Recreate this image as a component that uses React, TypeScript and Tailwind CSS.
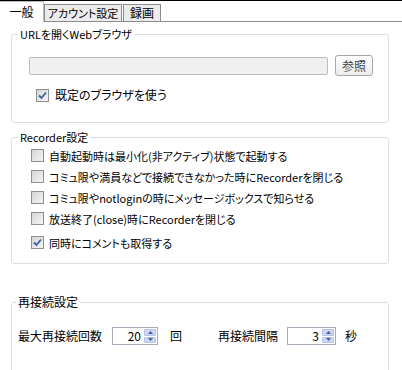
import React from 'react';

const CheckBox: React.FC<{ checked?: boolean }> = ({ checked }) => (
  <span className="flex h-[13px] w-[13px] shrink-0 items-center justify-center border border-[#8f8f8f] bg-linear-to-br from-[#d6d6d6] to-[#f4f4f4]">
    {checked && (
      <svg width="9" height="9" viewBox="0 0 9 9">
        <path d="M1 4.5 L3.5 7 L8 1.5" fill="none" stroke="#3d5ea6" strokeWidth="1.8" />
      </svg>
    )}
  </span>
);

const Spinner: React.FC<{ value: number; width: string }> = ({ value, width }) => (
  <div className={`flex h-[18px] items-stretch border border-[#a5acb5] bg-white ${width}`}>
    <span className="flex-1 pr-[2px] text-right leading-[16px]">{value}</span>
    <div className="flex w-[14px] flex-col gap-px bg-white p-px">
      <div className="flex flex-1 items-center justify-center rounded-[1px] border border-[#b4c3e6] bg-[#c9d6f5]">
        <svg width="5" height="3" viewBox="0 0 5 3">
          <path d="M0 3 L2.5 0 L5 3 Z" fill="#4d6185" />
        </svg>
      </div>
      <div className="flex flex-1 items-center justify-center rounded-[1px] border border-[#b4c3e6] bg-[#c9d6f5]">
        <svg width="5" height="3" viewBox="0 0 5 3">
          <path d="M0 0 L5 0 L2.5 3 Z" fill="#4d6185" />
        </svg>
      </div>
    </div>
  </div>
);

const recorderOptions = [
  { label: '自動起動時は最小化(非アクティブ)状態で起動する', checked: false },
  { label: 'コミュ限や満員などで接続できなかった時にRecorderを閉じる', checked: false },
  { label: 'コミュ限やnotloginの時にメッセージボックスで知らせる', checked: false },
  { label: '放送終了(close)時にRecorderを閉じる', checked: false },
];

export default function App() {
  return (
    <div className="h-[370px] w-[402px] overflow-hidden bg-white font-['Noto_Sans_CJK_JP','Noto_Sans',sans-serif] text-[12px] leading-[14px] text-black [font-feature-settings:'palt']">
      <div className="h-px bg-black" />

      {/* tabs */}
      <div className="flex h-[21px] items-end border-b border-[#8c8c8c]">
        <div className="-mb-px flex h-[21px] w-[44px] items-center justify-center border-r border-t border-[#b8b8b8] bg-white pb-[1px]">
          一般
        </div>
        <div className="flex h-[17px] w-[78px] items-center justify-center whitespace-nowrap border border-b-0 border-[#8c8c8c] bg-[#ececec] text-[11px]">
          アカウント設定
        </div>
        <div className="ml-px flex h-[17px] w-[38px] items-center justify-center border border-b-0 border-[#8c8c8c] bg-[#ececec]">
          録画
        </div>
      </div>

      <div className="pl-[11px] pr-[13px]">
        <fieldset className="mt-[5px] rounded-[3px] border border-[#d5dfe5]">
          <legend className="ml-[6px] px-[2px] text-[11px]">URLを開くWebブラウザ</legend>
          <div className="pb-[20px] pl-[17px] pr-[15px]">
            <div className="mt-[15px] flex items-center gap-[7px]">
              <div className="h-[18px] flex-1 rounded-[2px] border border-[#bcbcbc] bg-[#f0f0f0]" />
              <button className="-my-[1px] h-[21px] w-[38px] rounded-[3px] border border-[#a7a7a7] bg-linear-to-b from-white to-[#ececec] text-[#444]">
                参照
              </button>
            </div>
            <label className="ml-[7px] mt-[13px] flex items-center gap-[6px]">
              <CheckBox checked />
              既定のブラウザを使う
            </label>
          </div>
        </fieldset>

        <fieldset className="mt-[7px] rounded-[3px] border border-[#d5dfe5]">
          <legend className="ml-[6px] px-[2px] text-[11px]">Recorder設定</legend>
          <div className="mt-[5px] flex flex-col gap-[8px] pb-[14px] pl-[19px] text-[11px]">
            {recorderOptions.map((o) => (
              <label key={o.label} className="flex h-[13px] items-center gap-[5px] whitespace-nowrap">
                <CheckBox checked={o.checked} />
                {o.label}
              </label>
            ))}
            <label className="mt-[3px] flex h-[13px] items-center gap-[5px]">
              <CheckBox checked />
              同時にコメントも取得する
            </label>
          </div>
        </fieldset>

        <fieldset className="mt-[31px] rounded-[3px] border border-[#d5dfe5]">
          <legend className="ml-[4px] px-[2px]">再接続設定</legend>
          <div className="mt-[18px] flex items-center pb-[40px] pl-[6px]">
            <span className="w-[94px]">最大再接続回数</span>
            <Spinner value={20} width="w-[46px]" />
            <span className="ml-[12px] w-[48px]">回</span>
            <span className="w-[69px]">再接続間隔</span>
            <Spinner value={3} width="w-[49px]" />
            <span className="ml-[9px]">秒</span>
          </div>
        </fieldset>
      </div>
    </div>
  );
}
